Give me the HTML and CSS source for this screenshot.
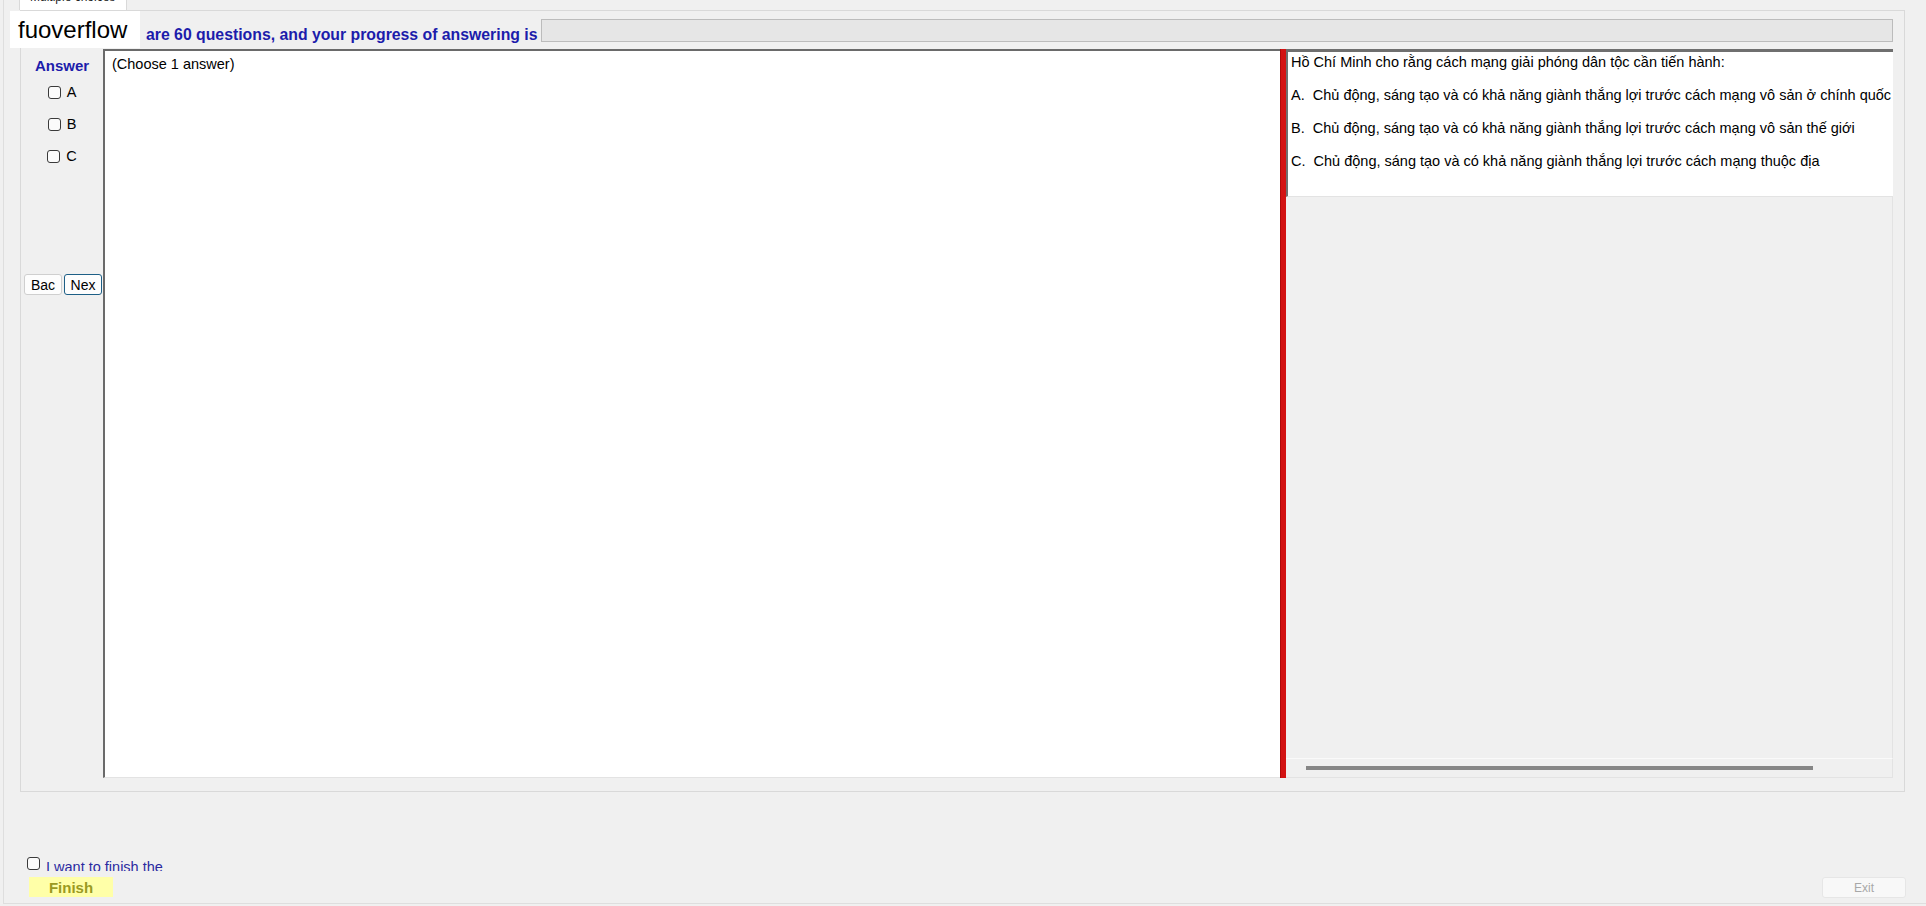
FILE: index.html
```html
<!DOCTYPE html>
<html lang="vi">
<head>
    <meta charset="UTF-8">
    <meta name="viewport" content="width=device-width, initial-scale=1.0">
    <title>Multiple choices</title>
    <link rel="stylesheet" href="styles.css">
</head>
<body>
    <div class="form">
        <div class="tabstrip">
            <div class="tab"><span>Multiple choices</span></div>
        </div>

        <div class="tabpage">
            <div class="header">
                <span class="count">are 60 questions, and your progress of answering is</span>
                <div class="progress"></div>
            </div>

            <div class="main">
                <div class="answers">
                    <div class="answers-title">Answer</div>
                    <label class="option"><input type="checkbox" class="check"> A</label>
                    <label class="option"><input type="checkbox" class="check"> B</label>
                    <label class="option"><input type="checkbox" class="check"> C</label>
                    <div class="nav">
                        <button class="btn">Bac</button>
                        <button class="btn focused">Nex</button>
                    </div>
                </div>

                <div class="question">(Choose 1 answer)</div>

                <div class="splitter"></div>

                <div class="preview">
                    <div class="content">
                        <p>Hồ Chí Minh cho rằng cách mạng giải phóng dân tộc cần tiến hành:</p>
                        <p>A.&nbsp; Chủ động, sáng tạo và có khả năng giành thắng lợi trước cách mạng vô sản ở chính quốc</p>
                        <p>B.&nbsp; Chủ động, sáng tạo và có khả năng giành thắng lợi trước cách mạng vô sản thế giới</p>
                        <p>C.&nbsp; Chủ động, sáng tạo và có khả năng giành thắng lợi trước cách mạng thuộc địa</p>
                    </div>
                    <div class="blank"></div>
                    <div class="hscroll"><div class="thumb"></div></div>
                </div>
            </div>
        </div>

        <div class="footer">
            <div class="finish-group">
                <label class="confirm">
                    <input type="checkbox" class="check">
                    <span class="confirm-text">I want to finish the</span>
                </label>
                <button class="finish">Finish</button>
            </div>
            <button class="exit" disabled>Exit</button>
        </div>
    </div>

    <!-- nhãn nằm đè lên góc trái của form -->
    <div class="brand">fuoverflow</div>
</body>
</html>
```

FILE: styles.css
```css
body {
    margin: 0;
    padding: 0;
    background-color: #f0f0f0;
    font-family: "Liberation Sans", Arial, sans-serif;
    font-size: 14.5px;
    color: #000;
    overflow: hidden;
}

.form {
    position: relative;
    height: 903px;
    margin-left: 3px;
    border-left: 1px solid #dedede;
    border-bottom: 1px solid #dedede;
}

.tabstrip {
    height: 10px;
}

.tab {
    width: 106px;
    height: 10px;
    margin-left: 15px;
    background: white;
    border-left: 1px solid #d9d9d9;
    border-right: 1px solid #d9d9d9;
    overflow: hidden;
}

.tab span {
    display: block;
    margin-top: -10px;
    padding-left: 10px;
    font-size: 12px;
    line-height: 14px;
    color: #222;
}

.tabpage {
    margin: 0 21px 0 16px;
    height: 782px;
    box-sizing: border-box;
    border: 1px solid #d9d9d9;
    padding-bottom: 13px;
}

.header {
    display: flex;
    align-items: flex-start;
    height: 38px;
    box-sizing: border-box;
    padding: 8px 11px 0 125px;
}

.count {
    margin-top: 6px;
    font-size: 15.8px;
    font-weight: bold;
    line-height: 20px;
    color: #1c1cab;
    white-space: nowrap;
}

.progress {
    flex: 1;
    height: 23px;
    margin-left: 3px;
    box-sizing: border-box;
    background: #e6e6e6;
    border: 1px solid #bcbcbc;
}

.main {
    display: flex;
    height: 729px;
    padding-right: 11px;
}

.answers {
    width: 82px;
    padding-top: 8px;
    box-sizing: border-box;
}

.answers-title {
    text-align: center;
    font-size: 15px;
    font-weight: bold;
    line-height: 18px;
    color: #1c1cab;
}

.option {
    display: flex;
    align-items: center;
    justify-content: center;
    gap: 6px;
    height: 32px;
    line-height: 17px;
}

.option:first-of-type {
    margin-top: 1px;
}

.check {
    appearance: none;
    -webkit-appearance: none;
    width: 13px;
    height: 13px;
    margin: 0;
    box-sizing: border-box;
    background: #fbfbfb;
    border: 1px solid #3a3a3a;
    border-radius: 3px;
}

.nav {
    display: flex;
    gap: 2px;
    margin-top: 102px;
    padding-left: 3px;
}

.btn {
    width: 38px;
    height: 21px;
    padding: 0;
    font-family: "Liberation Sans", Arial, sans-serif;
    font-size: 14px;
    color: #000;
    background: #fdfdfd;
    border: 1px solid #cfcfcf;
    border-radius: 3px;
}

.btn.focused {
    border-color: #1d5f86;
}

.question {
    width: 1177px;
    box-sizing: border-box;
    background: white;
    border-top: 2px solid #6a6a6a;
    border-left: 2px solid #6a6a6a;
    border-bottom: 1px solid #e3e3e3;
    padding: 5px 7px;
    line-height: 17px;
}

.splitter {
    width: 6px;
    background: #d31313;
    border-left: 1px solid #b00a0a;
    box-sizing: border-box;
}

.preview {
    flex: 1;
    display: flex;
    flex-direction: column;
    min-width: 0;
}

.content {
    height: 148px;
    box-sizing: border-box;
    background: white;
    border-top: 3px solid #6f6f6f;
    border-left: 2px solid #6f6f6f;
    border-bottom: 1px solid #e3e3e3;
    padding: 2px 0 0 3px;
    overflow: hidden;
    white-space: nowrap;
}

.content p {
    margin: 0 0 16.4px;
    line-height: 16.7px;
}

.blank {
    flex: 1;
    border-right: 1px solid #e3e3e3;
}

.hscroll {
    height: 20px;
    box-sizing: border-box;
    border-top: 1px solid #fafafa;
    border-bottom: 1px solid #e3e3e3;
    border-right: 1px solid #e3e3e3;
    padding: 7px 0 0 20px;
}

.thumb {
    width: 507px;
    height: 4px;
    background: #868686;
}

.footer {
    display: flex;
    justify-content: space-between;
    align-items: flex-end;
    height: 111px;
    box-sizing: border-box;
    padding: 0 20px 6px 23px;
}

.finish-group {
    display: flex;
    flex-direction: column;
}

.confirm {
    display: flex;
    align-items: flex-start;
    gap: 6px;
    height: 16px;
}

.confirm .check {
    margin-top: 2px;
    flex-shrink: 0;
}

/* the label is cut at the bottom, like in the form */
.confirm-text {
    display: block;
    height: 12px;
    margin-top: 4px;
    overflow: hidden;
    white-space: nowrap;
    line-height: 17px;
    color: #2a2aa0;
}

.finish {
    width: 84px;
    height: 20px;
    margin: 6px 0 0 2px;
    padding: 0;
    font-family: "Liberation Sans", Arial, sans-serif;
    font-size: 15px;
    font-weight: bold;
    color: #9a9a22;
    background: #ffffa8;
    border: none;
}

.exit {
    width: 84px;
    height: 21px;
    margin-bottom: -1px;
    padding: 0;
    font-family: "Liberation Sans", Arial, sans-serif;
    font-size: 12px;
    color: #a8a8a8;
    background: #f8f8f8;
    border: 1px solid #e6e6e6;
    border-radius: 3px;
}

.brand {
    position: absolute;
    left: 10px;
    top: 11px;
    width: 130px;
    height: 37px;
    box-sizing: border-box;
    padding-left: 8px;
    background: white;
    font-size: 24px;
    line-height: 37px;
    color: #000;
}
```
